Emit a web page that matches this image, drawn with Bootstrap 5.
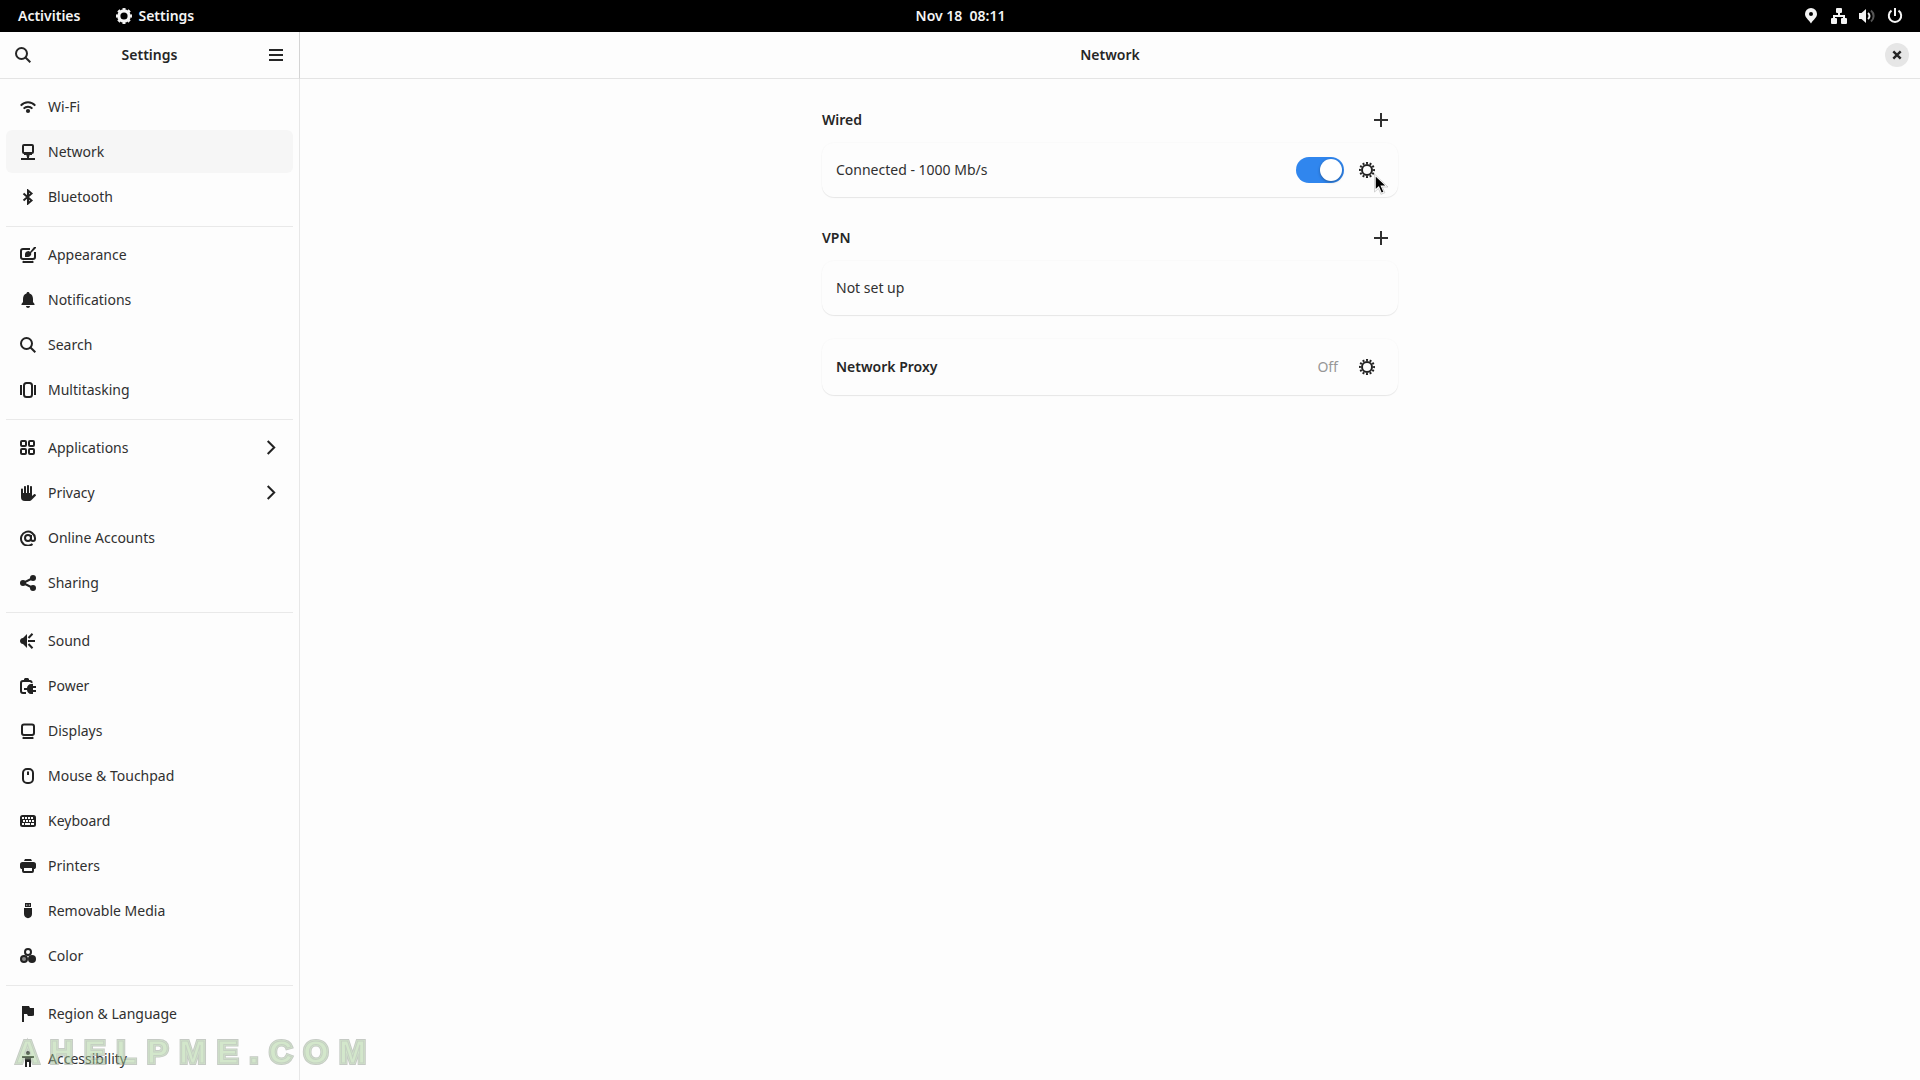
<!DOCTYPE html>
<html lang="en">
<head>
<meta charset="utf-8">
<meta name="viewport" content="width=device-width, initial-scale=1">
<title>Settings – Network</title>
<link href="https://cdn.jsdelivr.net/npm/bootstrap@5.3.0/dist/css/bootstrap.min.css" rel="stylesheet">
<style>
body{font-family:"Noto Sans",sans-serif;font-size:14px;line-height:20px;color:#303030;background:#fdfdfd}
svg{display:block;width:16px;height:16px;flex:none;fill:currentColor}
.ln{fill:none;stroke:currentColor;stroke-width:2}
.shell-bar{height:32px;background:#000;color:#f4f4f4;font-weight:600;padding:0 17px 0 18px}
.shell-bar>*{flex:1 1 0}
.shell-bar .clock{flex:0 0 auto;white-space:pre}
.shell-bar button,.icon-btn{background:none;border:0;padding:0;color:inherit;font-weight:inherit}
.app-menu{gap:6px;margin-left:36px}
.tray{gap:12px}
.side{width:300px;flex:none;border-right:1px solid #e7e7e7}
.bar{height:47px;border-bottom:1px solid #e4e4e4;color:#262626}
.side .bar{padding:0 15px;margin-right:-1px;border-right:1px solid #d4d4d4}
.main-bar{padding:0 11px}
.bar h1,.bar h2{font-size:14px;line-height:20px;font-weight:600;margin:0}
.side-list{padding:6px 6px 0}
.side-group{display:flex;flex-direction:column;gap:2px;list-style:none;margin:0;padding:0}
.side-group+.side-group{border-top:1px solid #e9e9e9;margin-top:8px;padding-top:6px}
.side-link{display:flex;align-items:center;gap:12px;height:43px;padding:0 14px;border-radius:6px;color:#303030;text-decoration:none}
.side-link svg{color:#222}
.side-link:hover,.side-link.active{background:#f6f6f6}
.close-btn{width:24px;height:24px;border-radius:50%;background:#e6e6e6}
.panel{max-width:576px;padding-top:24px}
.sect-head{height:34px;margin-bottom:6px;padding-right:9px}
.sect-head h3,.proxy-name{font-size:14px;line-height:20px;font-weight:600;margin:0;color:#262626}
.box{min-height:54px;margin-bottom:24px;padding:0 14px;border-radius:12px;background:#fdfdfd;box-shadow:0 0 0 1px rgba(0,0,0,.012),0 1px 1px rgba(0,0,0,.08)}
.proxy-box{min-height:56px}
.gear-btn{margin:0 9px 0 15px;color:#222}
.off-text{color:#979797;margin-right:6px}
.form-switch .form-check-input{width:48px;height:26px;margin:0;border:0;cursor:pointer;position:relative}
.form-switch .form-check-input:checked{background-color:#3086ee;background-image:none;box-shadow:none}
.form-switch .form-check-input::after{content:"";position:absolute;top:2px;left:2px;width:22px;height:22px;border-radius:50%;background:#fff;box-shadow:0 1px 3px rgba(0,0,0,.35)}
.form-switch .form-check-input:checked::after{left:24px}
.pointer{position:absolute;left:15px;top:12px;width:14px;height:21px;pointer-events:none}
.stamp,.stamp::before,.stamp::after{font:bold 32px/36px "Liberation Sans",sans-serif;letter-spacing:11px;white-space:nowrap}
.stamp{position:fixed;left:16px;bottom:10px;color:#9fb39b;-webkit-text-stroke:4px #8d988b;opacity:.5;pointer-events:none}
.stamp::before,.stamp::after{content:attr(data-text);position:absolute;left:0;top:0}
.stamp::before{color:#a9d29a;-webkit-text-stroke:2px #a9d29a}
.stamp::after{color:#a9d29a;-webkit-text-stroke:1px #8ea488}
</style>
<script src="https://cdn.jsdelivr.net/npm/bootstrap@5.3.0/dist/js/bootstrap.bundle.min.js"></script>
</head>
<body class="min-vh-100 d-flex flex-column overflow-hidden">
<svg class="d-none" aria-hidden="true">
 <symbol id="i-gear" viewBox="0 0 16 16"><circle class="ln" cx="8" cy="8" r="5"/><circle class="ln" cx="8" cy="8" r="7" pathLength="120" stroke-dasharray="5.500 4.500" stroke-dashoffset="2.700"/></symbol>
 <symbol id="i-search" viewBox="0 0 16 16"><circle class="ln" cx="6.5" cy="6.5" r="5.5"/><path class="ln" d="M10.5 10.500 15.300 15.300"/></symbol>
</svg>

<header class="shell-bar d-flex align-items-center">
 <div class="d-flex align-items-center">
  <button type="button">Activities</button>
  <button type="button" class="app-menu d-flex align-items-center">
   <svg viewBox="0 0 16 16"><circle cx="8" cy="8" r="5.200" fill="none" stroke="currentColor" stroke-width="3.200"/><circle cx="8" cy="8" r="7" fill="none" stroke="currentColor" stroke-width="2" pathLength="80" stroke-dasharray="5.500 4.500" stroke-dashoffset="2.700"/></svg>Settings</button>
 </div>
 <button type="button" class="clock">Nov 18  08:11</button>
 <div class="tray d-flex justify-content-end align-items-center">
  <svg viewBox="0 0 16 16" role="img" aria-label="Location"><path fill-rule="evenodd" d="M8 0a6 6 0 0 0-6 6c0 3.500 3.500 5.500 6 9.500C10.500 11.500 14 9.500 14 6a6 6 0 0 0-6-6m0 4a2 2 0 1 1 0 4 2 2 0 0 1 0-4"/></svg>
  <svg viewBox="0 0 16 16" role="img" aria-label="Wired network"><path d="M6 0h4a1 1 0 0 1 1 1v3a1 1 0 0 1-1 1H9v2h5v3h1a1 1 0 0 1 1 1v4a1 1 0 0 1-1 1h-4a1 1 0 0 1-1-1v-4a1 1 0 0 1 1-1h1V9H4v1h1a1 1 0 0 1 1 1v4a1 1 0 0 1-1 1H1a1 1 0 0 1-1-1v-4a1 1 0 0 1 1-1h1V7h5V5H6a1 1 0 0 1-1-1V1a1 1 0 0 1 1-1"/></svg>
  <svg viewBox="0 0 16 16" role="img" aria-label="Volume"><path d="M0 5h2.500L7 1v14L2.500 11H0z"/><path class="ln" d="M9 5c2 1.500 2 4.500 0 6"/><path class="ln" opacity=".35" d="M12 2.500c3.500 3 3.500 8 0 11"/></svg>
  <svg viewBox="0 0 16 16" role="img" aria-label="Power"><path class="ln" d="M4.500 2.700a6.200 6.200 0 1 0 7 0M8 0v8"/></svg>
 </div>
</header>

<div class="d-flex flex-grow-1">
 <aside class="side">
  <div class="bar d-flex align-items-center justify-content-between">
   <button type="button" class="icon-btn" aria-label="Search"><svg><use href="#i-search"/></svg></button>
   <h1>Settings</h1>
   <button type="button" class="icon-btn" aria-label="Main menu"><svg viewBox="0 0 16 16"><path class="ln" d="M1 3h14M1 8h14M1 13h14"/></svg></button>
  </div>
  <nav class="side-list" aria-label="Settings panels">
   <ul class="side-group">
    <li><a class="side-link" href="#"><svg viewBox="0 0 16 16"><path class="ln" d="M.700 6.600c4.200-4.500 10.400-4.500 14.600 0M3.600 9.600c2.500-2.600 6.300-2.600 8.800 0"/><circle cx="8" cy="12" r="2.100"/></svg>Wi-Fi</a></li>
    <li><a class="side-link active" href="#" aria-current="page"><svg viewBox="0 0 16 16"><rect class="ln" x="3" y="1" width="10" height="8" rx="1"/><path d="M4 9h8v2H9.500v1.500H9V14h6v2H1v-2h6v-1.500h-.5V11H4z"/></svg>Network</a></li>
    <li><a class="side-link" href="#"><svg viewBox="0 0 16 16"><path class="ln" d="m3.500 4.500 8 7L8 14.500v-13l3.500 3-8 7"/></svg>Bluetooth</a></li>
   </ul>
   <ul class="side-group">
    <li><a class="side-link" href="#"><svg viewBox="0 0 16 16"><path class="ln" d="M10 2H3a2 2 0 0 0-2 2v6a2 2 0 0 0 2 2h10a2 2 0 0 0 2-2V5"/><path d="M4 14h8a1 1 0 0 1 1 2H3a1 1 0 0 1 1-2"/><path d="M5 10V7c0-2 2-3 4-3l1 1 4-5h2v1l-5 5c1 2-1 4-3 4z"/></svg>Appearance</a></li>
    <li><a class="side-link" href="#"><svg viewBox="0 0 16 16"><path d="M8 0c1 0 1.500.700 1.500 1.500C12 2.300 13 4.500 13 7v3l1.500 2v1h-13v-1L3 10V7c0-2.500 1-4.700 3.500-5.500C6.500.700 7 0 8 0M6 14h4c0 2.500-4 2.500-4 0"/></svg>Notifications</a></li>
    <li><a class="side-link" href="#"><svg><use href="#i-search"/></svg>Search</a></li>
    <li><a class="side-link" href="#"><svg viewBox="0 0 16 16"><rect class="ln" x="4" y="1" width="8" height="14" rx="2.500"/><path class="ln" d="M1 3v10M15 3v10"/></svg>Multitasking</a></li>
   </ul>
   <ul class="side-group">
    <li><a class="side-link" href="#"><svg viewBox="0 0 16 16"><g class="ln"><rect x="1" y="1" width="5" height="5" rx="1"/><rect x="9" y="1" width="5" height="5" rx="1"/><rect x="1" y="9" width="5" height="5" rx="1"/><rect x="9" y="9" width="5" height="5" rx="1"/></g></svg>Applications<svg class="ms-auto" viewBox="0 0 16 16"><path class="ln" d="m4.700 1 6.500 6.500-6.500 6.500"/></svg></a></li>
    <li><a class="side-link" href="#"><svg viewBox="0 0 16 16"><path d="M1 4.500c0-1.300 2-1.300 2 0V8h1V2c0-1.300 2-1.300 2 0v6h1V1c0-1.300 2-1.300 2 0v7h1V2c0-1.300 2-1.300 2 0v9l2-1.700c1-.7 2 .3 2 1.200l-4 4c-1 1.200-2 1.500-3 1.500H5c-3 0-4-1.500-4-4z"/></svg>Privacy<svg class="ms-auto" viewBox="0 0 16 16"><path class="ln" d="m4.700 1 6.500 6.500-6.500 6.500"/></svg></a></li>
    <li><a class="side-link" href="#"><svg viewBox="0 0 16 16"><circle class="ln" cx="8" cy="8" r="3"/><path class="ln" d="M12.500 14A7 7 0 1 1 15 8v1c0 2.500-4 2.500-4 0V5"/></svg>Online Accounts</a></li>
    <li><a class="side-link" href="#"><svg viewBox="0 0 16 16"><circle cx="3" cy="8" r="3"/><circle cx="13" cy="3" r="3"/><circle cx="13" cy="13" r="3"/><path class="ln" d="M13 3 3 8l10 5"/></svg>Sharing</a></li>
   </ul>
   <ul class="side-group">
    <li><a class="side-link" href="#"><svg viewBox="0 0 16 16"><path d="M7 1v14l-4-4C-1 11-1 5 3 5z"/><path class="ln" d="M8 8h7M8.500 5l4-4.200M8.500 11l4 4.200"/></svg>Sound</a></li>
    <li><a class="side-link" href="#"><svg viewBox="0 0 16 16"><path class="ln" d="M6 15H3a2 2 0 0 1-2-2V5a2 2 0 0 1 2-2h7a1.500 1.500 0 0 1 1.500 2"/><path d="M4 2V1l1-1h3l1 1v1zM4 10h3c0-2 2-4 4-4h2v2h3v2h-3v2h3v2h-3v2h-2c-2 0-4-2-4-4H4z"/></svg>Power</a></li>
    <li><a class="side-link" href="#"><svg viewBox="0 0 16 16"><rect class="ln" x="2" y="1.500" width="12" height="10.500" rx="2"/><path d="M4 14h8a1 1 0 0 1 1 2H3a1 1 0 0 1 1-2"/></svg>Displays</a></li>
    <li><a class="side-link" href="#"><svg viewBox="0 0 16 16"><rect class="ln" x="3" y="1" width="10" height="14" rx="4"/><path class="ln" d="M8 3.500V7"/></svg>Mouse &amp; Touchpad</a></li>
    <li><a class="side-link" href="#"><svg viewBox="0 0 16 16"><rect y="2" width="16" height="12" rx="2.500"/><g stroke="#fdfdfd" stroke-width="2" fill="none"><path stroke-dasharray="2 1" d="M2 5h12"/><path stroke-dasharray="2 1" d="M3 8h11"/><path d="M2 11h2M5 11h5M11 11h3"/></g></svg>Keyboard</a></li>
    <li><a class="side-link" href="#"><svg viewBox="0 0 16 16"><path d="M5 1h6l1 2H4z"/><path fill-rule="evenodd" d="M2.500 4h11A2.500 2.500 0 0 1 16 6.500V9c0 1.500-1 2-2 2v2a2 2 0 0 1-2 2H4a2 2 0 0 1-2-2v-2c-1 0-2-.5-2-2V6.500A2.500 2.500 0 0 1 2.500 4M4 10v3h8v-3z"/></svg>Printers</a></li>
    <li><a class="side-link" href="#"><svg viewBox="0 0 16 16"><path fill-rule="evenodd" d="M5 0h6v4H5zM6.300 1.500v1.200h1V1.500zM8.800 1.500v1.200h1V1.500zM4 5h8v6c0 5.500-8 5.500-8 0z"/></svg>Removable Media</a></li>
    <li><a class="side-link" href="#"><svg viewBox="0 0 16 16"><circle class="ln" cx="8" cy="4" r="3"/><circle cx="4" cy="11" r="3" fill="#888" stroke="currentColor" stroke-width="2"/><circle cx="12" cy="11" r="4"/></svg>Color</a></li>
   </ul>
   <ul class="side-group">
    <li><a class="side-link" href="#"><svg viewBox="0 0 16 16"><path d="M2 0h7l1 2h4v7.500L12 10H8L7 8H4v8H2z"/></svg>Region &amp; Language</a></li>
    <li><a class="side-link" href="#"><svg viewBox="0 0 16 16"><circle cx="8" cy="2" r="2"/><path d="M2 5h12v2h-3v9H9v-5H7v5H5V7H2z"/></svg>Accessibility</a></li>
   </ul>
  </nav>
 </aside>

 <main class="flex-grow-1">
  <div class="bar main-bar d-flex align-items-center">
   <div class="col"></div>
   <h2>Network</h2>
   <div class="col d-flex justify-content-end"><button type="button" class="icon-btn close-btn d-flex align-items-center justify-content-center" aria-label="Close"><svg viewBox="0 0 16 16"><path fill="none" stroke="currentColor" stroke-width="2.400" d="m4.300 4.300 7.400 7.400m0-7.400-7.400 7.400"/></svg></button></div>
  </div>
  <div class="panel mx-auto">
   <section>
    <div class="sect-head d-flex align-items-center justify-content-between"><h3>Wired</h3>
     <button type="button" class="icon-btn" aria-label="Add wired connection"><svg viewBox="0 0 16 16"><path class="ln" d="M1 8h14M8 1v14"/></svg></button></div>
    <div class="box d-flex align-items-center">
     <label class="flex-grow-1" for="wired-on">Connected - 1000 Mb/s</label>
     <div class="form-check form-switch p-0 m-0 d-flex"><input class="form-check-input" type="checkbox" role="switch" id="wired-on" checked></div>
     <button type="button" class="icon-btn gear-btn position-relative" aria-label="Wired options"><svg><use href="#i-gear"/></svg>
      <svg class="pointer" viewBox="0 0 14 21" aria-hidden="true"><path d="M1 1v15.500l3.600-3.300 2.700 6.300 3-1.300-2.700-6H13z" fill="#000" stroke="#fff" stroke-width="1.500"/><path d="M.500 0v18l4-3.500 2.400 5.800 4-1.600-2.600-5.700H14z" fill="none" stroke="#aaa" stroke-width=".500"/></svg></button>
    </div>
   </section>
   <section>
    <div class="sect-head d-flex align-items-center justify-content-between"><h3>VPN</h3>
     <button type="button" class="icon-btn" aria-label="Add VPN"><svg viewBox="0 0 16 16"><path class="ln" d="M1 8h14M8 1v14"/></svg></button></div>
    <div class="box d-flex align-items-center">Not set up</div>
   </section>
   <section class="box proxy-box d-flex align-items-center">
    <h3 class="proxy-name flex-grow-1">Network Proxy</h3>
    <span class="off-text">Off</span>
    <button type="button" class="icon-btn gear-btn" aria-label="Proxy options"><svg><use href="#i-gear"/></svg></button>
   </section>
  </div>
 </main>
</div>
<div class="stamp" data-text="AHELPME.COM">AHELPME.COM</div>
</body>
</html>
